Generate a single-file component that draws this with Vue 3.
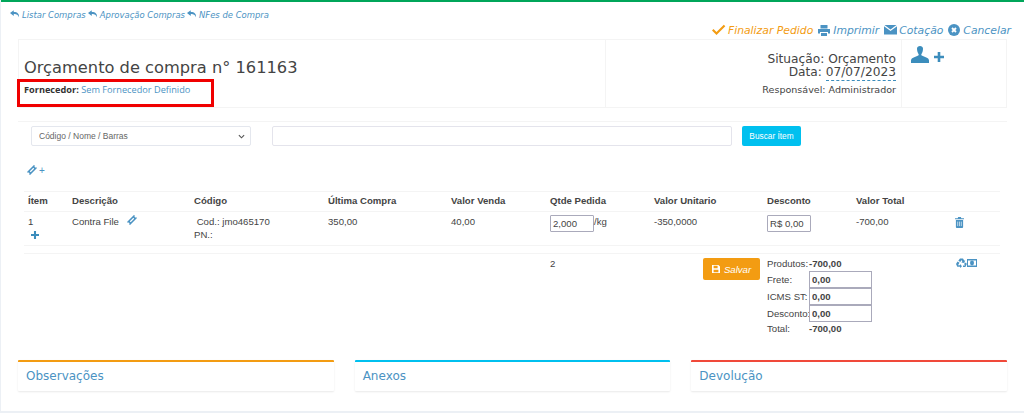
<script setup>
const crumbs = ['Listar Compras', 'Aprovação Compras', 'NFes de Compra']
const panels = [
  { title: 'Observações', color: 'orange' },
  { title: 'Anexos', color: 'cyan' },
  { title: 'Devolução', color: 'red' }
]
const heads = ['Ítem', 'Descrição', 'Código', 'Última Compra', 'Valor Venda', 'Qtde Pedida', 'Valor Unitario', 'Desconto', 'Valor Total', '']
const ticket = 'M0 4.500h16v2a1.500 1.500 0 0 0 0 3v2H0v-2a1.500 1.500 0 0 0 0-3ZM4 7v2h8V7Z'
</script>

<template>
  <div class="box">
    <nav class="crumbs">
      <a v-for="c in crumbs" :key="c" class="crumb">
        <svg class="reply" viewBox="0 0 16 12"><path d="M6 0 0 4.500 6 9V6.200c4-.3 6.500.6 8 4.800C15.500 6 12 2.800 6 2.800Z" /></svg>{{ c }}
      </a>
    </nav>

    <div class="actions">
      <a class="act finish">
        <svg class="ic-check" viewBox="0 0 15 12"><path d="M1 6.500 2.500 5l3 3L12.800 0.800 14.300 2.300 5.500 11Z" /></svg>Finalizar Pedido
      </a>
      <a class="act">
        <svg class="ic-print" viewBox="0 0 12 11"><path d="M2.500 0h7v3.500h-7ZM0 4h12v4.500h-2V7H2v1.500H0ZM3 8h6v3H3Z" /></svg>Imprimir
      </a>
      <a class="act">
        <svg class="ic-mail" viewBox="0 0 13 10"><path d="M0 1.200 6.500 6 13 1.200V9.500H0ZM.5 0h12L6.500 4.600Z" /></svg>Cotação
      </a>
      <a class="act">
        <svg class="ic-x" viewBox="0 0 12 12"><circle cx="6" cy="6" r="6" /><path d="M4 4l4 4M8 4l-4 4" stroke="#fff" stroke-width="1.800" /></svg>Cancelar
      </a>
    </div>

    <header class="head">
      <div class="head-left">
        <h1>Orçamento de compra n° 161163</h1>
        <p class="supplier"><b>Fornecedor:</b> <a>Sem Fornecedor Definido</a></p>
        <div class="redbox"></div>
      </div>
      <div class="head-mid">
        <div class="status">Situação: Orçamento</div>
        <div class="status">Data: <span class="dashed">07/07/2023</span></div>
        <div class="resp">Responsável: Administrador</div>
      </div>
      <div class="head-right">
        <svg class="ic-user" viewBox="0 0 18 17"><path d="M6 2.500C6 1 7.300 0 9 0s3 1 3 2.500c0 2-.5 4.200-1.500 5.500-.5.800-.2 1.300.8 1.800l4 1.700c1.300.6 2.700 1.300 2.700 3V17H0v-2.500c0-1.700 1.400-2.400 2.700-3l4-1.700c1-.5 1.300-1 .8-1.800C6.500 6.700 6 4.500 6 2.500Z" /></svg>
        <svg class="ic-plus" viewBox="0 0 10 10"><path d="M3.700 0h2.600v3.700H10v2.600H6.300V10H3.700V6.300H0V3.700h3.700Z" /></svg>
      </div>
    </header>

    <div class="strip"></div>

    <form class="search" @submit.prevent>
      <div class="select-wrap">
        <select class="select"><option>Código / Nome / Barras</option></select>
        <svg class="chev" viewBox="0 0 8 5"><path d="M1 1l3 3 3-3" /></svg>
      </div>
      <input class="text" type="text" />
      <button class="btn-search" type="button">Buscar Ítem</button>
    </form>

    <div class="add-row">
      <svg class="ic-ticket" viewBox="0 0 16 16"><path fill-rule="evenodd" :d="ticket" transform="rotate(-45 8 8)" /></svg><span>+</span>
    </div>

    <table class="grid">
      <colgroup>
        <col style="width:44px" /><col style="width:122px" /><col style="width:134px" /><col style="width:123px" /><col style="width:99px" />
        <col style="width:104px" /><col style="width:113px" /><col style="width:89px" /><col style="width:99px" /><col style="width:49px" />
      </colgroup>
      <thead>
        <tr><th v-for="h in heads" :key="h">{{ h }}</th></tr>
      </thead>
      <tbody>
        <tr class="item">
          <td>1<br /><svg class="ic-plus small" viewBox="0 0 10 10"><path d="M3.700 0h2.600v3.700H10v2.600H6.300V10H3.700V6.300H0V3.700h3.700Z" /></svg></td>
          <td>Contra File<svg class="ic-ticket inline" viewBox="0 0 16 16"><path fill-rule="evenodd" :d="ticket" transform="rotate(-45 8 8)" /></svg></td>
          <td>&nbsp;Cod.: jmo465170<br />PN.:</td>
          <td>350,00</td>
          <td>40,00</td>
          <td><input class="cell-input qty" value="2,000" />/kg</td>
          <td>-350,0000</td>
          <td><input class="cell-input disc" value="R$ 0,00" /></td>
          <td>-700,00</td>
          <td><svg class="ic-trash" viewBox="0 0 10 12"><path d="M3.500 0h3l.5 1.200H10v1.300H0V1.200h3ZM1 3.300h8V11a1 1 0 0 1-1 1H2a1 1 0 0 1-1-1Z" /><path d="M3 5v5M5 5v5M7 5v5" stroke="#fff" stroke-width=".7" /></svg></td>
        </tr>
        <tr class="spacer"><td colspan="10"></td></tr>
        <tr class="summary">
          <td colspan="5"></td>
          <td>2</td>
          <td class="save-cell">
            <button class="btn-save" type="button">
              <svg class="ic-save" viewBox="0 0 10 10"><path fill-rule="evenodd" d="M0 0h8l2 2v8H0ZM2 1v3h5V1ZM2 6v3h6V6Z" /></svg>Salvar
            </button>
          </td>
          <td colspan="2">
            <div class="totals">
              <span class="t-top">Produtos:</span><b class="t-top">-700,00</b>
              <span>Frete:</span><input class="t-input" value="0,00" />
              <span>ICMS ST:</span><input class="t-input" value="0,00" />
              <span>Desconto:</span><input class="t-input" value="0,00" />
              <span class="t-total">Total:</span><b class="t-total">-700,00</b>
            </div>
          </td>
          <td>
            <div class="ic-pair">
              <svg class="ic-recycle" viewBox="0 0 11 10"><path d="M4 .5h3l1.300 2.200 1-.6-1 3-3-.7 1-.6L5.500 2 4.300 4l-2-1.200ZM0 6l1.500-2.500 2 1.200L2 7.200h2V6l2 2.300L4 10V8.800H1.300ZM10.800 6 9.400 9H7V7.500h2L8 5.700l2-1.200Z" /></svg>
              <svg class="ic-money" viewBox="0 0 10 8"><path fill-rule="evenodd" d="M0 0h10v8H0ZM1 1.500v5h8v-5Z" /><ellipse cx="5" cy="4" rx="2" ry="2.400" /></svg>
            </div>
          </td>
        </tr>
      </tbody>
    </table>

    <section class="panels">
      <div v-for="p in panels" :key="p.title" class="panel" :class="p.color">{{ p.title }}</div>
    </section>
  </div>
</template>

<style>
html, body { margin: 0; background: #ecf0f5; }
</style>

<style scoped>
.box {
  box-sizing: border-box;
  height: 411px;
  margin-left: 1px;
  border-top: 2px solid #00a65a;
  background: #fff;
  color: #333;
  font-family: "Liberation Sans", Arial, sans-serif;
  font-size: 9.600px;
  overflow: hidden;
  padding: 0 17px;
}
a { color: #3c8dbc; }
svg { fill: currentColor; }

.crumbs {
  display: flex;
  gap: 2px;
  height: 16px;
  margin: 5px 0 0 -8px;
  align-items: center;
  font-family: "DejaVu Sans", sans-serif;
  font-size: 8.450px;
  font-style: italic;
}
.crumb { display: flex; align-items: center; color: #4b93c3; }
.reply { width: 10px; height: 8px; margin-right: 2px; position: relative; top: -1px; }

.actions {
  display: flex;
  justify-content: flex-end;
  gap: 5px;
  height: 16px;
  margin-top: -1px;
  margin-right: -4px;
  padding-bottom: 1px;
  align-items: center;
  font-family: "DejaVu Sans", sans-serif;
  font-size: 10.800px;
  font-style: italic;
}
.act { display: flex; align-items: center; color: #4b93c3; }
.finish { color: #f39c12; }
.ic-check { width: 15px; height: 12px; margin-right: 2px; }
.ic-print { width: 12px; height: 11px; margin-right: 3px; }
.ic-mail { width: 13px; height: 10px; margin-right: 2px; }
.ic-x { width: 12px; height: 12px; margin-right: 3px; }

.head {
  display: grid;
  grid-template-columns: 586px 297px 1fr;
  height: 69px;
  box-sizing: border-box;
  border: 1px solid #f4f4f4;
}
.head-left { position: relative; padding: 18px 0 0 5px; }
h1 {
  margin: 0;
  font-family: "DejaVu Sans", sans-serif;
  font-size: 16.250px;
  font-weight: 400;
  line-height: 20px;
  color: #444;
}
.supplier { margin: 5px 0 0; font-size: 9.200px; line-height: 13px; font-family: "Open Sans", sans-serif; }
.supplier a { color: #4b93c3; }
.redbox {
  position: absolute;
  left: -2px;
  top: 39px;
  width: 197px;
  height: 28px;
  box-sizing: border-box;
  border: 3px solid #f00000;
  pointer-events: none;
}
.head-mid {
  border-left: 1px solid #f4f4f4;
  border-right: 1px solid #f4f4f4;
  text-align: right;
  padding: 13px 5px 0 0;
  font-family: "DejaVu Sans", sans-serif;
  color: #444;
}
.status { font-size: 12.200px; line-height: 13px; }
.dashed { border-bottom: 1px dashed #3c8dbc; padding-bottom: 1px; }
.resp { font-size: 9.550px; line-height: 12px; margin-top: 5px; }
.head-right { display: flex; align-items: flex-start; padding: 6px 0 0 9px; color: #3c8dbc; }
.ic-user { width: 18px; height: 17px; }
.ic-plus { width: 10px; height: 10px; margin: 6px 0 0 5px; color: #3c8dbc; }

.strip { height: 14px; box-sizing: border-box; border-bottom: 1px solid #f4f4f4; }

.search { display: flex; align-items: flex-start; height: 20px; margin: 4px 0 0 13px; }
.select-wrap { position: relative; width: 220px; height: 20px; margin-right: 21px; }
.select {
  appearance: none;
  width: 100%;
  height: 20px;
  box-sizing: border-box;
  border: 1px solid #e4e7ee;
  border-radius: 2px;
  background: #fff;
  padding: 0 7px;
  color: #666;
  font: 8.500px "Liberation Sans", Arial, sans-serif;
}
.chev {
  position: absolute;
  right: 6px;
  top: 8px;
  width: 7px;
  height: 5px;
  fill: none;
  stroke: #555;
  stroke-width: 1.300;
}
.text {
  width: 460px;
  height: 20px;
  box-sizing: border-box;
  border: 1px solid #e4e4ec;
  border-radius: 2px;
  margin-right: 10px;
  padding: 0;
}
.btn-search {
  width: 59px;
  height: 20px;
  border: 0;
  border-radius: 2px;
  padding: 0;
  background: #00c0ef;
  color: #fff;
  font: 8.300px "Liberation Sans", Arial, sans-serif;
}

.add-row {
  display: flex;
  align-items: center;
  gap: 2px;
  height: 14px;
  margin: 17px 0 0 9px;
  color: #4b93c3;
  font-size: 10px;
}
.ic-ticket { width: 10px; height: 10px; color: #4b93c3; }
.ic-ticket.inline { margin-left: 8px; position: relative; top: 0; vertical-align: top; }

.grid {
  table-layout: fixed;
  border-collapse: collapse;
  width: 976px;
  margin: 14px 0 0 6px;
  font-size: 9.600px;
  color: #444;
}
th, td { padding: 0 0 0 4px; vertical-align: top; text-align: left; }
th {
  height: 20px;
  box-sizing: border-box;
  line-height: 18px;
  font-weight: 700;
  border-top: 1px solid #f4f4f4;
  border-bottom: 1px solid #f4f4f4;
}
.item td { height: 34px; box-sizing: border-box; padding-top: 3px; line-height: 13px; border-bottom: 1px solid #f4f4f4; }
.ic-plus.small { width: 8px; height: 8px; margin: 3px 0 0 3px; display: block; }
.cell-input {
  box-sizing: border-box;
  height: 17px;
  margin: 0;
  padding: 0 2px;
  border: 1px solid #aab;
  border-radius: 1px;
  color: #444;
  font: 9.600px "Liberation Sans", Arial, sans-serif;
  vertical-align: top;
}
.qty { width: 44px; }
.disc { width: 44px; }
.ic-trash { width: 9px; height: 11px; margin: 2px 0 0 0; color: #4b93c3; }
.spacer td { height: 7px; padding: 0; border-bottom: 1px solid #f4f4f4; }
.summary td { padding-top: 4px; }
.save-cell { text-align: right; }
.save-cell .btn-save { margin-right: 3px; }
.btn-save {
  display: inline-flex;
  align-items: center;
  justify-content: center;
  width: 57px;
  height: 22px;
  border: 0;
  border-radius: 2px;
  padding: 0;
  background: #f39c12;
  color: #fff;
  font: italic 9.600px "Liberation Sans", Arial, sans-serif;
}
.ic-save { width: 8px; height: 8px; margin-right: 4px; }
.totals {
  display: grid;
  grid-template-columns: 42px 63px;
  line-height: 17px;
  align-items: center;
  white-space: nowrap;
}
.t-top { height: 13px; line-height: 11px; }
.t-total { height: 13px; line-height: 13px; }
.t-input {
  box-sizing: border-box;
  width: 63px;
  height: 17px;
  padding: 0 2px;
  border: 1px solid #aab;
  font: 700 9.600px "Liberation Sans", Arial, sans-serif;
  color: #444;
}
.ic-pair { display: flex; gap: 0; margin-left: 1px; color: #4b93c3; }
.ic-recycle { width: 11px; height: 10px; }
.ic-money { width: 10px; height: 8px; margin-top: 1px; }

.panels {
  display: grid;
  grid-template-columns: repeat(3, 1fr);
  gap: 21px;
  margin-top: 25px;
}
.panel {
  box-sizing: border-box;
  height: 31px;
  border-top: 2px solid;
  padding: 6px 8px 0;
  border-radius: 1px;
  box-shadow: 0 1px 2px rgba(0, 0, 0, .09);
  color: #4b93c3;
  font: 12px/16px "DejaVu Sans", sans-serif;
}
.orange { border-top-color: #f39c12; }
.cyan { border-top-color: #00c0ef; }
.red { border-top-color: #f0493a; }
</style>
